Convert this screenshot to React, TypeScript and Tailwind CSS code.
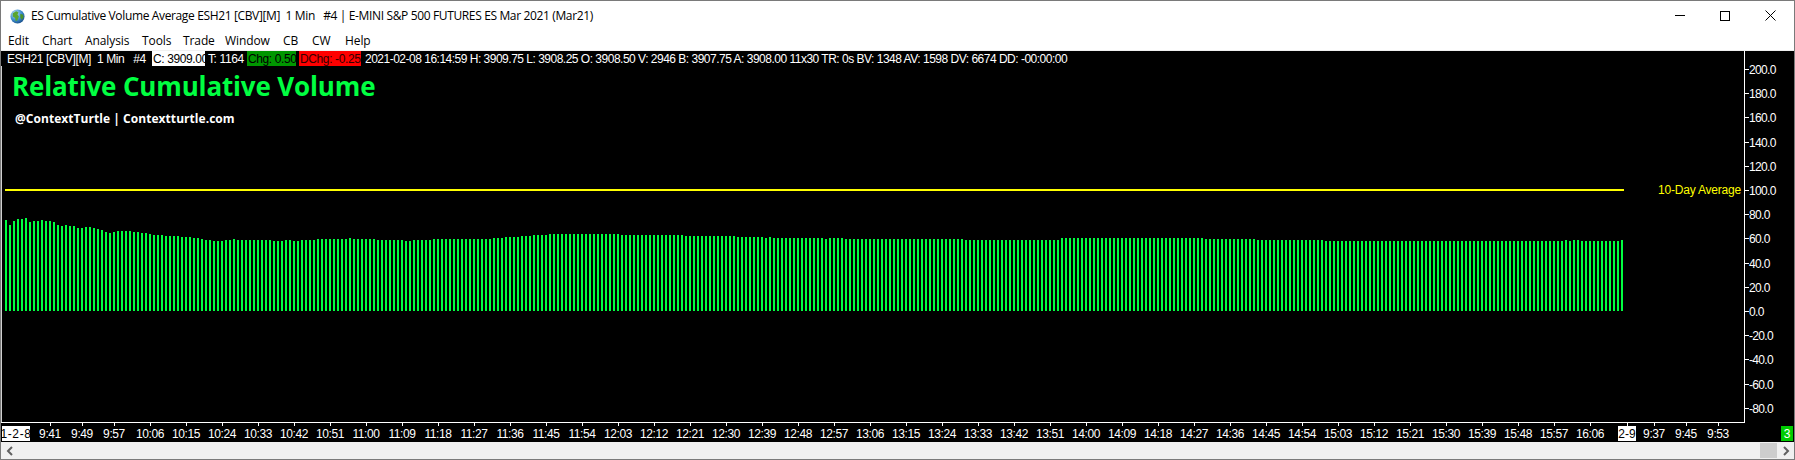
const menuItems = [
  { label: "Edit", className: "w-[34px]" },
  { label: "Chart", className: "w-[43px]" },
  { label: "Analysis", className: "w-[57px]" },
  { label: "Tools", className: "w-[41px]" },
  { label: "Trade", className: "w-[42px]" },
  { label: "Window", className: "w-[58px]" },
  { label: "CB", className: "w-[29px]" },
  { label: "CW", className: "w-[33px]" },
  { label: "Help", className: "w-[40px]" },
];

const firstTops = [
  220, 225, 221, 219, 219, 218, 222, 221, 221, 220, 221, 221, 222, 225, 226, 225, 226, 226, 228, 228, 227, 227, 228,
  229, 230, 232, 233, 232, 231, 231, 231, 231, 232, 232, 233, 233, 234, 235, 235, 235, 236, 236, 236, 236, 237, 237,
  237, 238, 238,
];

// [last bar x, top y] for the flat part of the series
const topRuns: [number, number][] = [
  [197, 238], [201, 239], [209, 240], [221, 241], [229, 240], [233, 239], [269, 240], [281, 241], [289, 240],
  [297, 241], [315, 240], [325, 239], [345, 239], [349, 238], [373, 239], [401, 240], [409, 241], [431, 240],
  [489, 239], [501, 238], [517, 237], [529, 236], [545, 235], [617, 234], [681, 235], [733, 236], [761, 237],
  [765, 238], [769, 237], [821, 238], [825, 239], [841, 238], [961, 239], [1057, 240], [1201, 238], [1253, 239],
  [1321, 240], [1561, 241], [1565, 240], [1569, 241], [1577, 240], [1617, 241], [1621, 240],
];

function barTop(i: number) {
  if (i < firstTops.length) return firstTops[i];
  const x = 5 + 4 * i;
  const run = topRuns.find((r) => x <= r[0]);
  return run ? run[1] : 240;
}

const bars = Array.from({ length: 405 }, (_, i) => ({ x: 5 + 4 * i, top: barTop(i) }));

const ZERO_Y = 311;
const axisValues = [200, 180, 160, 140, 120, 100, 80, 60, 40, 20, 0, -20, -40, -60, -80];

function pad(n: number) {
  return n < 10 ? "0" + n : "" + n;
}

const timeTicks: { x: number; label: string }[] = [
  { x: 50, label: "9:41" },
  { x: 82, label: "9:49" },
  { x: 114, label: "9:57" },
];
for (let k = 0; k <= 40; k++) {
  const mins = 10 * 60 + 6 + 9 * k;
  timeTicks.push({ x: 150 + 36 * k, label: Math.floor(mins / 60) + ":" + pad(mins % 60) });
}
timeTicks.push({ x: 1654, label: "9:37" }, { x: 1686, label: "9:45" }, { x: 1718, label: "9:53" });

function Globe() {
  return (
    <svg width="15" height="15" viewBox="0 0 16 16" className="ml-[9px] mr-[6px] shrink-0">
      <defs>
        <radialGradient id="sea" cx="0.35" cy="0.3" r="0.8">
          <stop offset="0" stopColor="#bfe3f7" />
          <stop offset="0.55" stopColor="#3f8fd0" />
          <stop offset="1" stopColor="#12457f" />
        </radialGradient>
      </defs>
      <circle cx="8" cy="8" r="7.5" fill="url(#sea)" />
      <path d="M3 4.5 6.5 2.5 9 3.5 8 6 9.5 8 8 12 6 13 5.5 9.5 3 8Z" fill="#5aa52f" />
      <path d="M11 5 14 6 14.5 9 12.5 11.5 11 9Z" fill="#4c9428" />
    </svg>
  );
}

function Chart() {
  return (
    <svg width="1793" height="391" viewBox="0 51 1793 391" className="absolute left-0 top-0 font-['Liberation_Sans',sans-serif] text-[12px]">
      <rect x="0" y="66" width="1" height="356" fill="#d0d0d0" />
      <rect x="0" y="422" width="1743" height="1" fill="#ffffff" />
      <rect x="1743" y="51" width="1" height="372" fill="#ffffff" />
      {bars.map((b) => (
        <rect key={b.x} x={b.x - 1} y={b.top} width="2" height={ZERO_Y - b.top} fill="#00ff41" />
      ))}
      <rect x="4" y="189" width="1619" height="2" fill="#ffff00" />
      <text x="1740" y="194" textAnchor="end" fill="#ffff00" letterSpacing="-0.2">
        10-Day Average
      </text>
      {axisValues.map((v) => {
        const y = Math.round(ZERO_Y - v * 1.21);
        return (
          <g key={v}>
            <rect x="1744" y={y} width="4" height="1" fill="#ffffff" />
            <text x="1748" y={y + 5} fill="#ffffff" letterSpacing="-0.67">
              {v.toFixed(1)}
            </text>
          </g>
        );
      })}
      {timeTicks.map((t) => (
        <g key={t.x}>
          <rect x={t.x - 1} y="423" width="1" height="3" fill="#ffffff" />
          <text x={t.x - 1} y="438" textAnchor="middle" fill="#ffffff" letterSpacing="-0.4">
            {t.label}
          </text>
        </g>
      ))}
      <rect x="1" y="426" width="28" height="15" fill="#ffffff" />
      <text x="15" y="438" textAnchor="middle" fill="#000000" letterSpacing="0.6">
        1-2-8
      </text>
      <rect x="1626" y="423" width="1" height="3" fill="#ffffff" />
      <rect x="1617" y="426" width="18" height="15" fill="#ffffff" />
      <text x="1626" y="438" textAnchor="middle" fill="#000000">
        2-9
      </text>
      <rect x="1780" y="426" width="12" height="15" fill="#00cc00" />
      <text x="1786" y="438" textAnchor="middle" fill="#ffffff">
        3
      </text>
    </svg>
  );
}

export default function App() {
  return (
    <div className="flex h-[460px] w-[1795px] flex-col overflow-hidden border border-[#7a7a7a] bg-white font-['Open_Sans',sans-serif] text-[12px] text-black">
      <div className="flex h-[30px] shrink-0 items-center">
        <Globe />
        <span className="whitespace-pre tracking-[-0.36px]">
          ES Cumulative Volume Average ESH21 [CBV][M]  1 Min   #4 | E-MINI S&amp;P 500 FUTURES ES Mar 2021 (Mar21)
        </span>
        <div className="ml-auto -mt-px flex items-center text-black">
          <svg width="10" height="10" viewBox="0 0 10 10" className="mr-[35px]">
            <rect x="0" y="4" width="10" height="1" fill="#000" />
          </svg>
          <svg width="10" height="10" viewBox="0 0 10 10" className="mr-[35px]">
            <rect x="0.5" y="0.5" width="9" height="9" fill="none" stroke="#000" />
          </svg>
          <svg width="11" height="11" viewBox="0 0 11 11" className="mr-[18px]">
            <path d="M0.5 0.5 10.5 10.5M10.5 0.5 0.5 10.5" stroke="#000" strokeWidth="1" />
          </svg>
        </div>
      </div>
      <div className="flex h-[20px] shrink-0 items-center border-b border-[#f0f0f0] pl-[7px] tracking-[-0.1px]">
        {menuItems.map((item) => (
          <span key={item.label} className={item.className}>
            {item.label}
          </span>
        ))}
      </div>
      <div className="relative flex h-[391px] shrink-0 flex-col bg-black font-['Liberation_Sans',sans-serif] text-white">
        <Chart />
        <div className="relative flex h-[15px] shrink-0 items-center whitespace-pre pl-[6px] leading-none tracking-[-0.38px]">
          <span className="w-[145px]">ESH21 [CBV][M]  1 Min   #4</span>
          <span className="flex h-full w-[53px] items-center bg-white pl-px text-black">C: 3909.00</span>
          <span className="ml-[3px] w-[39px]">T: 1164</span>
          <span className="flex h-full w-[49px] items-center bg-[#009600] pl-px text-black">Chg: 0.50</span>
          <span className="ml-[3px] flex h-full w-[62px] items-center bg-[#ff0000] pl-px text-[#300]">DChg: -0.25</span>
          <span className="ml-[4px] tracking-[-0.5px]">
            2021-02-08 16:14:59 H: 3909.75 L: 3908.25 O: 3908.50 V: 2946 B: 3907.75 A: 3908.00 11x30 TR: 0s BV: 1348 AV: 1598 DV: 6674 DD: -00:00:00
          </span>
        </div>
        <div className="absolute left-[11px] top-[17px] font-['Open_Sans',sans-serif] text-[26px] font-bold leading-[36px] tracking-[-0.15px] text-[#00ff41]">
          Relative Cumulative Volume
        </div>
        <div className="absolute left-[14px] top-[59px] font-['Open_Sans',sans-serif] text-[12px] font-bold leading-[18px] tracking-[0.05px] text-white">
          @ContextTurtle | Contextturtle.com
        </div>
      </div>
      <div className="flex flex-1 items-center justify-between bg-[#f0f0f0] text-[#606060]">
        <svg width="8" height="10" viewBox="0 0 8 10" className="ml-[5px]">
          <path d="M6 1 2 5 6 9" fill="none" stroke="#606060" strokeWidth="2" />
        </svg>
        <div className="flex items-center">
          <div className="h-[15px] w-[17px] bg-[#cdcdcd]" />
          <svg width="8" height="10" viewBox="0 0 8 10" className="ml-[5px] mr-[4px]">
            <path d="M2 1 6 5 2 9" fill="none" stroke="#606060" strokeWidth="2" />
          </svg>
        </div>
      </div>
    </div>
  );
}
